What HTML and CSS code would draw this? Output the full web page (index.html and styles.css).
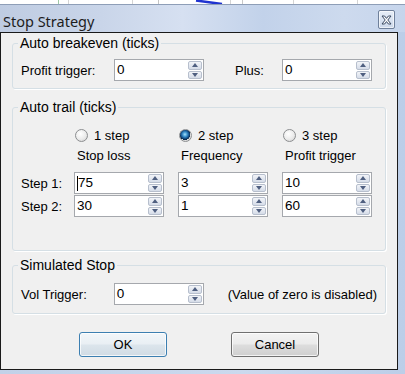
FILE: index.html
```html
<!DOCTYPE html>
<html>
<head>
<meta charset="utf-8">
<link rel="stylesheet" href="styles.css">
</head>
<body>
<div class="desk">
  <svg width="405" height="4" viewBox="0 0 405 4">
    <line x1="58.5" y1="0" x2="58.5" y2="4" stroke="#9fc9a6" stroke-width="1"/>
    <line x1="68.5" y1="0" x2="68.5" y2="4" stroke="#d4d4d4" stroke-width="1"/>
    <line x1="132.5" y1="0" x2="132.5" y2="4" stroke="#d4d4d4" stroke-width="1"/>
    <line x1="158.5" y1="0" x2="158.5" y2="4" stroke="#c4c4c4" stroke-width="1"/>
    <line x1="230.5" y1="0" x2="230.5" y2="4" stroke="#d4d4d4" stroke-width="1"/>
    <line x1="242.5" y1="0" x2="242.5" y2="4" stroke="#c8c8c8" stroke-width="1"/>
    <line x1="293.5" y1="0" x2="293.5" y2="4" stroke="#d4d4d4" stroke-width="1"/>
    <line x1="357.5" y1="0" x2="357.5" y2="4" stroke="#d4d4d4" stroke-width="1"/>
    <line x1="196" y1="0.5" x2="222" y2="4" stroke="#1f33d0" stroke-width="2.5"/>
  </svg>
</div>
<div class="window">
  <div class="titlebar">
    <span class="title">Stop Strategy</span>
    <span class="close">
      <svg width="11" height="10" viewBox="0 0 11 10">
        <polygon points="1,1 3.6,1 5.5,3.4 7.4,1 10,1 6.8,5 10,9 7.4,9 5.5,6.6 3.6,9 1,9 4.2,5" fill="#fff" stroke="#3b4a63" stroke-width="1" stroke-linejoin="round"/>
      </svg>
    </span>
  </div>
  <div class="client">
    <fieldset class="group g1">
      <legend>Auto breakeven (ticks)</legend>
      <div class="row">
        <span class="lbl">Profit trigger:</span>
        <div class="spin"><span class="val">0</span><span class="arrows"><span class="arr up"></span><span class="arr dn"></span></span></div>
        <span class="lbl plus">Plus:</span>
        <div class="spin"><span class="val">0</span><span class="arrows"><span class="arr up"></span><span class="arr dn"></span></span></div>
      </div>
    </fieldset>

    <fieldset class="group g2">
      <legend>Auto trail (ticks)</legend>
      <div class="grid radios">
        <span></span>
        <span class="opt"><span class="radio"></span>1 step</span>
        <span class="opt"><span class="radio on"></span>2 step</span>
        <span class="opt"><span class="radio"></span>3 step</span>
      </div>
      <div class="grid heads">
        <span></span>
        <span class="head">Stop loss</span>
        <span class="head">Frequency</span>
        <span class="head">Profit trigger</span>
      </div>
      <div class="grid steps">
        <span class="lbl">Step 1:</span>
        <div class="spin"><span class="val"><span class="caret"></span>75</span><span class="arrows"><span class="arr up"></span><span class="arr dn"></span></span></div>
        <div class="spin"><span class="val">3</span><span class="arrows"><span class="arr up"></span><span class="arr dn"></span></span></div>
        <div class="spin"><span class="val">10</span><span class="arrows"><span class="arr up"></span><span class="arr dn"></span></span></div>
        <span class="lbl">Step 2:</span>
        <div class="spin"><span class="val">30</span><span class="arrows"><span class="arr up"></span><span class="arr dn"></span></span></div>
        <div class="spin"><span class="val">1</span><span class="arrows"><span class="arr up"></span><span class="arr dn"></span></span></div>
        <div class="spin"><span class="val">60</span><span class="arrows"><span class="arr up"></span><span class="arr dn"></span></span></div>
      </div>
    </fieldset>

    <fieldset class="group g3">
      <legend>Simulated Stop</legend>
      <div class="row">
        <span class="lbl">Vol Trigger:</span>
        <div class="spin"><span class="val">0</span><span class="arrows"><span class="arr up"></span><span class="arr dn"></span></span></div>
        <span class="note">(Value of zero is disabled)</span>
      </div>
    </fieldset>

    <div class="buttons">
      <button class="btn ok">OK</button>
      <button class="btn">Cancel</button>
    </div>
  </div>
</div>
</body>
</html>
```
FILE: styles.css
```css
* { box-sizing: border-box; }
html, body { margin: 0; padding: 0; }
body {
  width: 405px;
  height: 374px;
  overflow: hidden;
  background: #fff;
  font-family: "Liberation Sans", Arial, sans-serif;
  font-size: 13px;
  color: #000;
}
.desk { height: 4px; }
.desk svg { display: block; }

.window {
  height: 370px;
  display: flex;
  flex-direction: column;
  background: linear-gradient(90deg, #c2d1e8, #cbd9ee 60%, #bccee8);
  padding: 0 7px 4px 0;
}
.titlebar {
  height: 28px;
  margin-right: -7px;
  display: flex;
  align-items: flex-start;
  justify-content: space-between;
  padding: 0 10px 0 3px;
  border-top: 1px solid #8e9eb7;
  background: linear-gradient(90deg, #bfcce2 0%, #c9d5e9 25%, #d6e0f1 45%, #c2d2ea 65%, #cddaee 85%, #c6d5ec 100%);
}
.title {
  margin-top: 6px;
  font-family: "Noto Sans", "Open Sans", sans-serif;
  font-size: 14.5px;
  line-height: 20px;
  color: #1d1d1d;
}
.close {
  margin-top: 5px;
  width: 17px;
  height: 19px;
  border: 1px solid #6f809b;
  border-radius: 2px;
  background: linear-gradient(#e6edf7, #cdd9eb);
  box-shadow: inset 0 0 0 1px rgba(255,255,255,0.6);
  display: flex;
  align-items: center;
  justify-content: center;
}
.close svg { display: block; }

.client {
  flex: 1;
  background: #f0f0f0;
  border: 1px solid #1a1a1a;
  padding-top: 2px;
  display: flex;
  flex-direction: column;
}

.group {
  margin: 0 11px;
  border: 1px solid #d5dfe5;
  border-radius: 3px;
  padding: 8px 8px 7px 8px;
  min-width: 0;
  box-shadow: 1px 1px 0 #fff;
}
.group legend {
  padding: 0 2px;
  margin-left: -3px;
  font-size: 14px;
  line-height: 16px;
  height: 16px;
}
.g2 { margin-top: 10px; padding: 0 8px 33px 8px; }
.g3 { margin-top: 6px; padding: 10px 8px 8px 8px; }

.row { display: flex; align-items: center; height: 22px; }
.lbl { width: 93px; white-space: nowrap; }
.plus { margin-left: 31px; width: 47px; }
.note { margin-left: 24px; white-space: nowrap; }

.grid {
  display: grid;
  grid-template-columns: 39px 90px 90px 90px;
  column-gap: 14px;
  align-items: center;
}
.radios { margin-top: 11px; height: 18px; }
.heads { margin-top: 3px; height: 16px; }
.steps { margin-top: 9px; row-gap: 1px; }
.steps .lbl { width: auto; }
.opt { display: flex; align-items: center; gap: 6px; padding-left: 1px; white-space: nowrap; }
.head { padding-left: 3px; white-space: nowrap; }

.radio {
  width: 13px;
  height: 13px;
  border-radius: 50%;
  border: 1px solid #8c8e90;
  background: radial-gradient(circle at 40% 35%, #ffffff 0%, #ebebeb 55%, #cdcdcd 100%);
  flex: none;
}
.radio.on {
  background:
    radial-gradient(circle at 45% 40%, #a9e2fb 0%, #3d94cf 25%, #14508a 45%, #0b2745 60%, transparent 62%),
    radial-gradient(circle at 40% 35%, #ffffff 0%, #e8e8e8 55%, #c9c9c9 100%);
}

.spin {
  display: flex;
  width: 90px;
  height: 22px;
  border: 1px solid #a5a8ad;
  background: #fff;
}
.val {
  flex: 1;
  padding-left: 2px;
  font-size: 13.5px;
  line-height: 20px;
  display: flex;
  align-items: center;
}
.caret { width: 1px; height: 15px; background: #000; margin-right: 0; }
.arrows {
  width: 15px;
  display: flex;
  flex-direction: column;
  gap: 1px;
  padding: 1px 1px 1px 0;
}
.arr {
  flex: 1;
  border: 1px solid #b7bfcd;
  border-radius: 2px;
  background: linear-gradient(#f2f4f8, #d5dce8);
  display: flex;
  align-items: center;
  justify-content: center;
}
.arr::after {
  content: "";
  width: 0;
  height: 0;
  border-left: 3.5px solid transparent;
  border-right: 3.5px solid transparent;
}
.arr.up::after { border-bottom: 4px solid #4f5f80; }
.arr.dn::after { border-top: 4px solid #4f5f80; }

.buttons {
  margin-top: 18px;
  display: flex;
  justify-content: center;
  gap: 64px;
}
.btn {
  width: 88px;
  height: 25px;
  border: 1px solid #707070;
  border-radius: 3px;
  background: linear-gradient(#f3f3f3 0%, #ebebeb 48%, #dddddd 52%, #cfcfcf 100%);
  box-shadow: inset 0 0 0 1px rgba(255,255,255,0.75);
  font-family: "Liberation Sans", Arial, sans-serif;
  font-size: 13px;
  color: #000;
  padding: 0;
}
.btn.ok {
  border-color: #3c7fb1;
  background: linear-gradient(#f2f6f9 0%, #e9eff4 48%, #dce5ec 52%, #d0dbe4 100%);
}
```
